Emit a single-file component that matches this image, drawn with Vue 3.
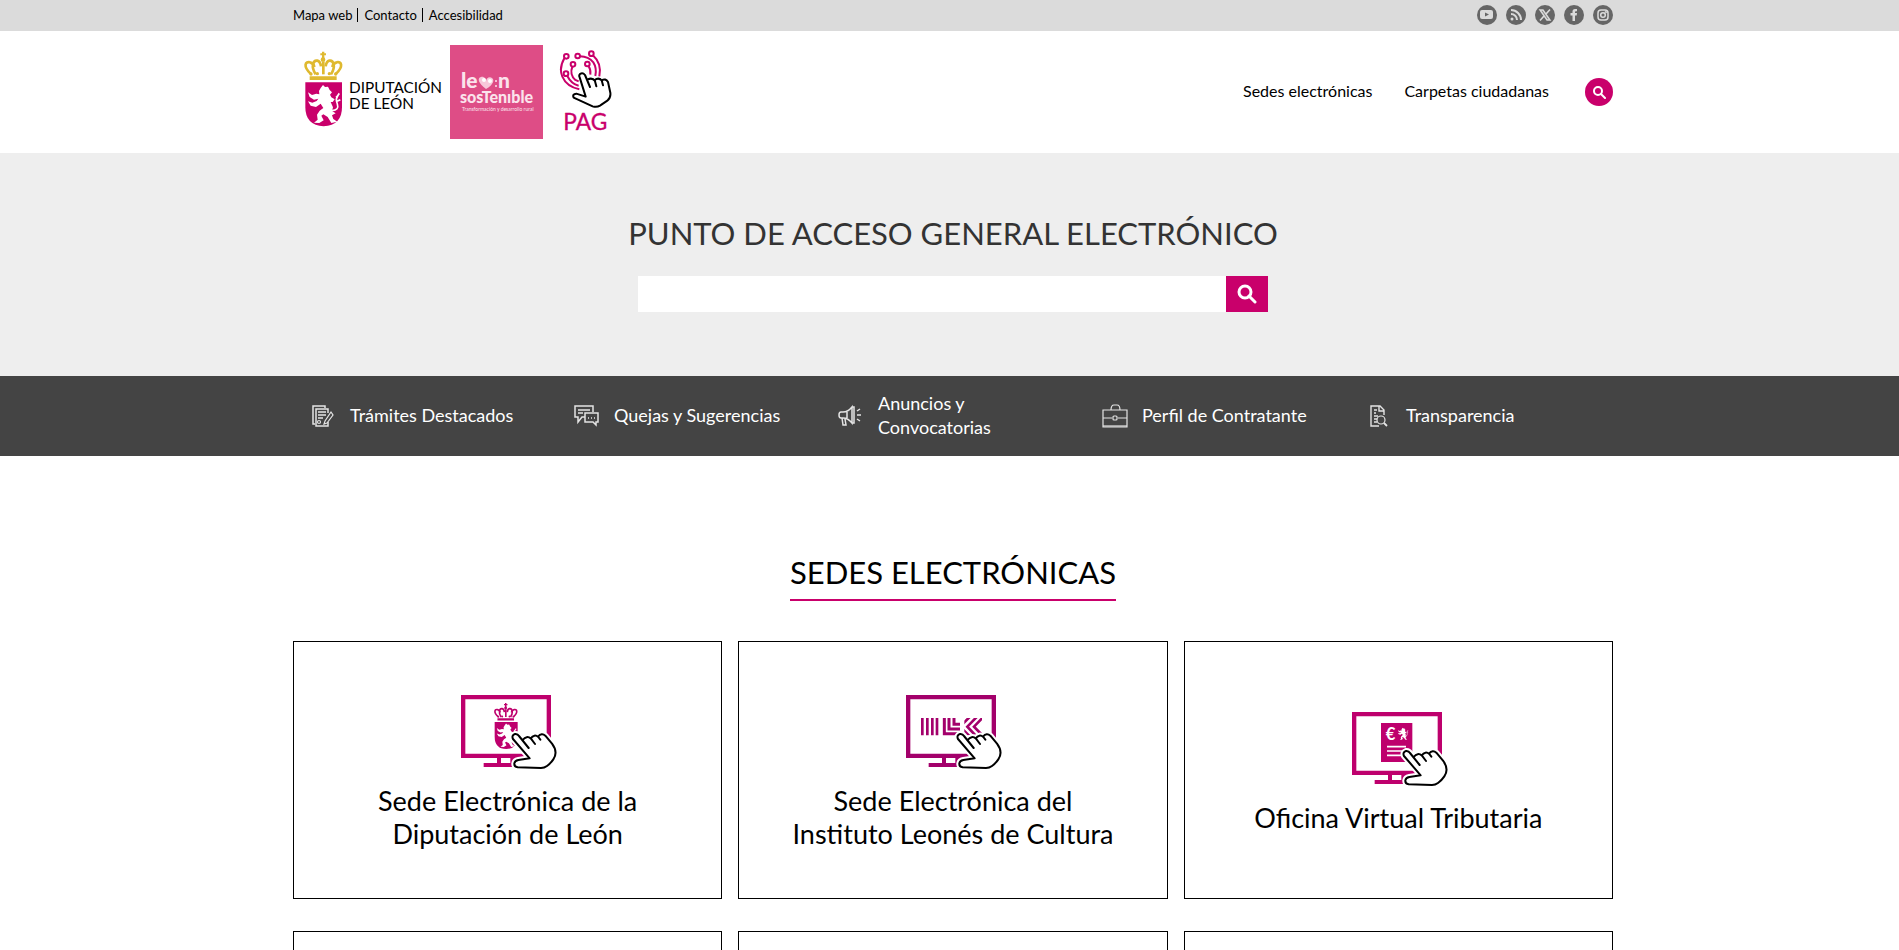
<script setup>
const topLinks = ['Mapa web', 'Contacto', 'Accesibilidad']
const social = [
  { id: 'youtube', label: 'YouTube' },
  { id: 'rss', label: 'RSS' },
  { id: 'x', label: 'X' },
  { id: 'facebook', label: 'Facebook' },
  { id: 'instagram', label: 'Instagram' },
]
const quick = [
  { id: 'form', label: 'Trámites Destacados' },
  { id: 'chat', label: 'Quejas y Sugerencias' },
  { id: 'horn', label: 'Anuncios y Convocatorias' },
  { id: 'case', label: 'Perfil de Contratante' },
  { id: 'doc', label: 'Transparencia' },
]
const cards = [
  { id: 'crest', label: 'Sede Electrónica de la Diputación de León' },
  { id: 'ilc', label: 'Sede Electrónica del Instituto Leonés de Cultura' },
  { id: 'tax', label: 'Oficina Virtual Tributaria' },
]
</script>

<template>
  <svg class="defs" aria-hidden="true">
    <defs>
      <symbol id="lion" viewBox="0 0 100 120" overflow="visible">
        <path d="M40 10 L47 1 L53 7 L62 6 L67 16 L74 23 L68 30 L72 38 L82 44 L76 52 L70 52 L77 68 L74 79 L85 86 L74 92 L78 103 L90 111 L72 115 L61 97 L48 89 L42 93 L49 107 L36 115 L20 114 L31 105 L29 90 L37 78 L48 70 L40 57 L26 67 L10 63 L2 50 L15 54 L28 49 L33 42 L20 45 L7 37 L2 23 L14 31 L27 27 L36 29 L35 19 Z" />
        <path d="M74 78 Q96 76 90 58 Q82 42 96 26 M89 50 L99 45 M86 38 L93 32" fill="none" stroke="currentColor" stroke-width="5" />
      </symbol>
      <symbol id="crown" viewBox="0 0 116 88" overflow="visible">
        <g fill="none" stroke="currentColor" stroke-width="8">
          <path d="M20 68 C-4 46 4 30 18 34 C28 36 30 42 31 48" />
          <path d="M35 70 C20 46 27 27 40 29 C48 31 50 38 51 46" />
          <path d="M58 70 V32" />
          <path d="M81 70 C96 46 89 27 76 29 C68 31 66 38 65 46" />
          <path d="M96 68 C120 46 112 30 98 34 C88 36 86 42 85 48" />
        </g>
        <path d="M17 76 H98 V87 H17 Z M54 2 h7 v5 h5 v6 h-5 v11 h-7 v-11 h-5 v-6 h5 z" />
        <circle cx="57" cy="26" r="7" />
        <circle cx="21" cy="69" r="5" /><circle cx="40" cy="68" r="5" /><circle cx="76" cy="68" r="5" /><circle cx="95" cy="69" r="5" />
      </symbol>
      <symbol id="hand" viewBox="0 0 134 108" overflow="visible">
        <path d="M22 10 L51 46 M33 22 Q45 7 58 18 L70 34 M57 17 Q68 3 80 13 L86 21 M79 12 Q90 -1 101 9 L121 33 Q140 58 125 80 Q116 93 106 100 Q98 106 88 106 L18 104 Q7 102 8 92 Q9 84 20 82 L54 77 L4 19 Q-1 8 10 4 Q18 3 22 10" />
      </symbol>
    </defs>
  </svg>

  <div class="topbar">
    <div class="wrap topbar-in">
      <nav class="toplinks" aria-label="Enlaces">
        <a v-for="t in topLinks" :key="t" href="#">{{ t }}</a>
      </nav>
      <div class="social">
        <a v-for="s in social" :key="s.id" href="#" :aria-label="s.label">
          <svg viewBox="0 0 20 20" width="20" height="20">
            <circle cx="10" cy="10" r="10" fill="#666" />
            <g v-if="s.id === 'youtube'">
              <rect x="3" y="5" width="13" height="9" rx="2" fill="#dbdbdb" />
              <path d="M8 7.500 L12 9.500 L8 11.500 Z" fill="#666" />
            </g>
            <g v-else-if="s.id === 'rss'" fill="none" stroke="#dbdbdb" stroke-width="2">
              <circle cx="6" cy="14" r="1.500" fill="#dbdbdb" stroke="none" />
              <path d="M5 9 A6 6 0 0 1 11 15 M5 5 A10 10 0 0 1 15 15" />
            </g>
            <g v-else-if="s.id === 'x'" fill="none" stroke="#dbdbdb">
              <path d="M5 5 H8 L15 15 H12 Z" fill="#888" stroke-width="1.400" />
              <path d="M15 4.500 L11 9 M9 11 L5 15.500" stroke-width="1.600" />
            </g>
            <path v-else-if="s.id === 'facebook'" d="M8.500 16 V10.500 H6.500 V8 H8.500 V6.500 Q8.500 4 11 4 H13 V6.300 H11.800 Q11 6.300 11 7.200 V8 H13 L12.700 10.500 H11 V16 Z" fill="#dbdbdb" />
            <g v-else fill="none" stroke="#dbdbdb" stroke-width="1.500">
              <rect x="5" y="5" width="10" height="10" rx="3" />
              <circle cx="10" cy="10" r="2.300" />
              <circle cx="12.800" cy="7.200" r="0.400" />
            </g>
          </svg>
        </a>
      </div>
    </div>
  </div>

  <header class="header">
    <div class="wrap header-in">
      <div class="logos">
        <a href="#" aria-label="Diputación de León">
          <svg viewBox="66 150 429 252" width="143" height="84">
            <use href="#crown" x="72" y="153" width="116" height="88" fill="#dfb92f" color="#dfb92f" />
            <path d="M76 247 H186 V322 Q186 376 131 379 Q76 376 76 322 Z" fill="#c9006b" />
            <use href="#lion" x="82" y="254" width="100" height="120" fill="#fff" color="#fff" />
            <text x="207" y="280" class="logo-text">DIPUTACIÓN</text>
            <text x="207" y="326" class="logo-text">DE LEÓN</text>
          </svg>
        </a>
        <a href="#" aria-label="León sostenible" class="leon">
          <svg viewBox="0 0 93 94" width="93" height="94">
            <rect width="93" height="94" fill="#de4d86" />
            <g fill="#fbe3ec">
              <text x="11" y="43" class="leon-a">le</text>
              <path d="M36 44 C28 38 27 33 31 32 C34 31 36 34 36 36 C36 34 39 31 42 33 C45 35 43 40 36 44 Z" fill="#f8c8da" />
              <circle cx="34" cy="35" r="2" fill="#fff" /><circle cx="40" cy="36" r="2" fill="#fff" />
              <circle cx="46" cy="36" r="1" /><circle cx="46" cy="41" r="1" />
              <text x="48" y="43" class="leon-a">n</text>
              <text x="10" y="58" class="leon-b">sosTenıble</text>
              <text x="12" y="66" class="leon-c">Transformación y desarrollo rural</text>
            </g>
          </svg>
        </a>
        <a href="#" aria-label="PAG" class="pag">
          <svg viewBox="837 150 159 252" width="53" height="84">
            <g fill="none" stroke="#c9006b" stroke-width="6">
              <circle cx="859" cy="169" r="7" /><circle cx="893" cy="168" r="7" /><circle cx="934" cy="161" r="7" />
              <circle cx="879" cy="193" r="7" /><circle cx="922" cy="192" r="7" /><circle cx="858" cy="221" r="7" />
              <path d="M853 175 Q836 205 847 230 Q860 260 898 268" />
              <path d="M862 228 Q874 252 896 257" />
              <path d="M877 200 Q868 224 886 240 L896 244" />
              <path d="M900 169 Q926 170 940 187 Q951 204 946 228" />
              <path d="M940 167 Q966 190 958 229" />
              <path d="M926 199 Q933 210 931 224" />
            </g>
            <path d="M899 232 L917 290 L889 281 Q876 282 881 293 L938 319 Q950 323 960 317 L982 302 Q993 293 991 278 L984 246 Q977 234 965 241 L969 256 M966 242 Q956 231 944 240 L949 259 M945 243 Q938 232 923 238 M930 261 L915 225 Q908 216 900 222 Q896 226 899 232" fill="#fff" stroke="#000" stroke-width="6" stroke-linejoin="round" stroke-linecap="round" />
            <text x="850" y="391" class="pag-text">PAG</text>
          </svg>
        </a>
      </div>
      <nav class="mainnav" aria-label="Principal">
        <a href="#">Sedes electrónicas</a>
        <a href="#">Carpetas ciudadanas</a>
        <button class="round" type="button" aria-label="Buscar">
          <svg viewBox="0 0 14 14" width="14" height="14" fill="none" stroke="#fff" stroke-width="2">
            <circle cx="6" cy="6" r="4" /><path d="M9 9 L13 13" stroke-linecap="round" />
          </svg>
        </button>
      </nav>
    </div>
  </header>

  <section class="hero">
    <h1>PUNTO DE ACCESO GENERAL ELECTRÓNICO</h1>
    <form class="search" @submit.prevent>
      <input type="text" aria-label="Buscar" />
      <button type="submit" aria-label="Buscar">
        <svg viewBox="0 0 20 20" width="20" height="20" fill="none" stroke="#fff" stroke-width="3">
          <circle cx="8" cy="8" r="6" /><path d="M12 12 L18 18" stroke-linecap="round" />
        </svg>
      </button>
    </form>
  </section>

  <nav class="quick" aria-label="Accesos directos">
    <div class="wrap quick-in">
      <a v-for="q in quick" :key="q.id" href="#">
        <svg viewBox="0 0 26 24" width="26" height="24" fill="none" stroke="#e4e4e4" stroke-width="1.200">
          <g v-if="q.id === 'form'">
            <path d="M5 20 H3 V2 H15 V4" stroke-width="1.500" />
            <path d="M18 9 V5 H6 V22 H18 V18 M8 8 H16 M8 11 H16 M8 14 H13" stroke-width="1.500" />
            <circle cx="9" cy="18" r="1.500" />
            <path d="M21 8 L23 11 L17 19 L14 20 L15 17 Z" />
          </g>
          <g v-else-if="q.id === 'chat'" stroke-width="1.500">
            <path d="M11 13 H8 L4 18 V13 H1 V2 H19 V8 M4 6 H16 M4 9 H9" />
            <path d="M11 9 H24 V18 H22 V21 L19 18 H11 Z M14 14 H15 M17 14 H18 M20 14 H21" />
          </g>
          <g v-else-if="q.id === 'horn'" stroke-width="1.500">
            <path d="M14 3 Q10 8 5 8 H3 Q1 8 1 11 Q1 14 3 14 H5 Q10 14 14 19 Z M14 3 H16 V19 H14 M4 14 L5 21 H8 L7 15 M9 8 V14" />
            <path d="M19 7 L22 5 M19 11 H23 M19 15 L22 17" />
          </g>
          <g v-else-if="q.id === 'case'">
            <path d="M1 6 H25 V23 H1 Z M1 14 H10 M16 14 H25 M9 6 Q9 1 12 1 H15 Q18 1 18 6" />
            <rect x="11" y="12" width="4" height="4" rx="1" /><path d="M1 22 H25" />
          </g>
          <g v-else>
            <path d="M13 22 H5 V2 H14 L18 6 V11 M13 2 V7 H18 M8 6 H11 M8 9 H10 M8 12 H12 M8 15 H11 M8 18 H11" stroke-width="1.400" />
            <circle cx="15" cy="16" r="4" /><path d="M18 19 L21 22" stroke-width="1.800" />
          </g>
        </svg>
        <span>{{ q.label }}</span>
      </a>
    </div>
  </nav>

  <main class="main">
    <h2><span>SEDES ELECTRÓNICAS</span></h2>
    <div class="wrap grid">
      <a v-for="c in cards" :key="c.id" class="card" href="#">
        <svg viewBox="540 195 291 222" width="97" height="74" overflow="visible" :class="c.id">
          <g fill="currentColor">
            <path d="M546 195 H816 V384 H546 Z M559 208 V371 H803 V208 Z" fill-rule="evenodd" />
            <path d="M654 384 H666 V399 H700 V411 H614 V399 H654 Z M694 384 H710 V399 H694 Z" />
            <g v-if="c.id === 'crest'">
              <use href="#crown" x="644" y="218" width="73" height="54" />
              <path d="M647 276 H716 V320 Q716 356 682 357 Q647 356 647 320 Z" />
              <use href="#lion" x="652" y="280" width="62" height="74" fill="#fff" color="#fff" />
            </g>
            <g v-else-if="c.id === 'ilc'">
              <path d="M591 264 h8 v52 h-8 z M606 264 h8 v52 h-8 z M621 264 h8 v52 h-8 z M635 264 h8 v52 h-8 z" />
              <path d="M661 264 V311 H700 M675 264 V297 H708 M690 264 V283 H708" fill="none" stroke="currentColor" stroke-width="9" />
              <clipPath id="chev"><rect x="721" y="264" width="53" height="52" /></clipPath>
              <path d="M779 260 L750 290 L779 320 M762 257 L730 290 L760 322 M741 257 L716 282 M716 298 L742 324" clip-path="url(#chev)" fill="none" stroke="currentColor" stroke-width="8" />
            </g>
            <g v-else>
              <path d="M633 228 H727 V345 H633 Z" />
              <text x="647" y="279" class="euro">€</text>
              <use href="#lion" x="683" y="242" width="32" height="38" fill="#fff" color="#fff" />
              <path d="M651 299 H708 M651 312 H708 M651 325 H708" stroke="#fff" stroke-width="5" />
            </g>
          </g>
          <g stroke-linejoin="round" stroke-linecap="round">
            <use href="#hand" x="698" y="308" width="134" height="108" fill="#fff" stroke="#fff" stroke-width="18" />
            <use href="#hand" x="698" y="308" width="134" height="108" fill="#fff" stroke="#000" stroke-width="6" />
          </g>
        </svg>
        <span>{{ c.label }}</span>
      </a>
      <div v-for="n in 3" :key="n" class="card"></div>
    </div>
  </main>
</template>

<style>
html {
  scrollbar-width: none;
  background: #fff;
}
body {
  margin: 0;
  font-family: Lato, "Liberation Sans", sans-serif;
  color: #000;
}
</style>

<style scoped>
* {
  box-sizing: border-box;
}
a {
  color: inherit;
  text-decoration: none;
}
svg {
  display: block;
  flex: none;
}
button {
  border: 0;
  padding: 0;
  background: #c9006b;
  display: grid;
  place-items: center;
  cursor: pointer;
}
.defs {
  position: absolute;
  width: 0;
  height: 0;
}
.topbar,
.header,
.hero,
.quick,
.main {
  padding-left: 7px;
}
.wrap {
  max-width: 1320px;
  margin: 0 auto;
}
.topbar {
  background: #dbdbdb;
}
.topbar-in {
  display: flex;
  justify-content: space-between;
  align-items: center;
  min-height: 31px;
  padding-bottom: 1px;
}
.toplinks {
  display: flex;
  font-size: 13px;
  line-height: 14px;
}
.toplinks a + a {
  border-left: 1px solid #000;
  margin-left: 5px;
  padding-left: 6px;
}
.social {
  display: flex;
  gap: 9px;
}
.header-in {
  display: flex;
  justify-content: space-between;
  align-items: center;
  min-height: 122px;
}
.logos {
  display: flex;
  align-items: center;
  padding-left: 9px;
}
.leon {
  margin-left: 5px;
}
.pag {
  margin-left: 16px;
}
.logo-text {
  font-size: 46px;
}
.leon-a {
  font-size: 21px;
  font-weight: 900;
}
.leon-b {
  font-size: 16px;
  font-weight: 900;
}
.leon-c {
  font-size: 5px;
}
.pag-text {
  font-size: 68px;
  fill: #c9006b;
  stroke: #c9006b;
  stroke-width: 1px;
}
.mainnav {
  display: flex;
  align-items: center;
  font-size: 16px;
  line-height: 20px;
}
.mainnav a {
  margin-right: 32px;
  padding-bottom: 3px;
}
.mainnav .round {
  width: 28px;
  height: 28px;
  border-radius: 50%;
  margin-left: 4px;
}
.hero {
  display: flex;
  flex-direction: column;
  align-items: center;
  background: #eee;
  padding-top: 60px;
  padding-bottom: 64px;
}
h1 {
  margin: 0 0 23px;
  font-size: 31px;
  line-height: 40px;
  font-weight: 400;
  color: #333;
}
.search {
  display: flex;
  width: 630px;
  max-width: 100%;
  height: 36px;
}
.search input {
  flex: 1;
  border: 0;
  padding: 0 12px;
  background: #fff;
  font: inherit;
}
.search button {
  width: 42px;
}
.quick {
  background: #444;
  color: #fff;
}
.quick-in {
  display: grid;
  grid-template-columns: repeat(5, 1fr);
  min-height: 80px;
}
.quick a {
  display: flex;
  align-items: center;
  gap: 14px;
  padding: 0 32px 0 17px;
  font-size: 18px;
  line-height: 24px;
}
.quick span {
  padding-bottom: 2px;
}
h2 {
  margin: 0 0 40px;
  padding-top: 96px;
  text-align: center;
  font-size: 31px;
  line-height: 40px;
  font-weight: 400;
}
h2 span {
  display: inline-block;
  padding-bottom: 7px;
  border-bottom: 2px solid #c9006b;
}
.grid {
  display: grid;
  grid-template-columns: repeat(3, 1fr);
  gap: 32px 16px;
}
.card {
  display: flex;
  flex-direction: column;
  align-items: center;
  justify-content: center;
  gap: 15px;
  min-height: 258px;
  padding: 5px 48px 0;
  border: 1px solid #000;
  text-align: center;
  font-size: 27px;
  line-height: 33px;
}
.card span {
  max-width: 332px;
}
.crest,
.tax {
  color: #be006d;
}
.ilc {
  color: #a3006b;
}
.euro {
  font-size: 50px;
  font-weight: 700;
  fill: #fff;
}
</style>
